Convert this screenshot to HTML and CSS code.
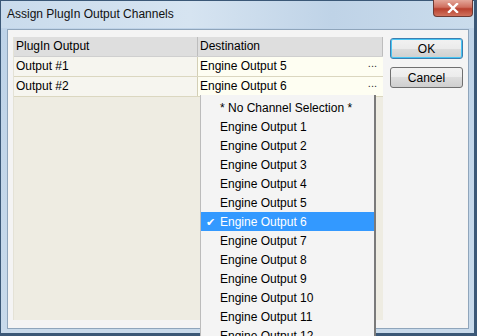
FILE: index.html
```html
<!DOCTYPE html>
<html lang="en">
<head>
    <meta charset="UTF-8">
    <title>Assign PlugIn Output Channels</title>
    <link rel="stylesheet" href="styles.css">
</head>
<body>
    <div class="window">
        <!-- Title bar -->
        <div class="titlebar">
            <span class="title">Assign PlugIn Output Channels</span>
            <div class="close-btn">
                <svg width="14" height="10" viewBox="0 0 14 10">
                    <path d="M3 1 L11 9 M11 1 L3 9" stroke="#fff" stroke-width="2.4" stroke-linecap="square"/>
                </svg>
            </div>
        </div>

        <!-- Client area -->
        <div class="client">
            <div class="grid">
                <div class="grid-row header">
                    <div class="cell col-out">PlugIn Output</div>
                    <div class="cell col-dest">Destination</div>
                </div>
                <div class="grid-row">
                    <div class="cell col-out">Output #1</div>
                    <div class="cell col-dest">Engine Output 5<span class="ellipsis">...</span></div>
                </div>
                <div class="grid-row">
                    <div class="cell col-out">Output #2</div>
                    <div class="cell col-dest">Engine Output 6<span class="ellipsis">...</span></div>
                </div>

                <!-- Open drop-down list -->
                <ul class="dropdown">
                    <li class="none">* No Channel Selection *</li>
                    <li>Engine Output 1</li>
                    <li>Engine Output 2</li>
                    <li>Engine Output 3</li>
                    <li>Engine Output 4</li>
                    <li>Engine Output 5</li>
                    <li class="selected"><span class="check">&#10004;</span>Engine Output 6</li>
                    <li>Engine Output 7</li>
                    <li>Engine Output 8</li>
                    <li>Engine Output 9</li>
                    <li>Engine Output 10</li>
                    <li>Engine Output 11</li>
                    <li>Engine Output 12</li>
                </ul>
            </div>

            <div class="buttons">
                <button class="btn default">OK</button>
                <button class="btn">Cancel</button>
            </div>
        </div>
    </div>
</body>
</html>
```

FILE: styles.css
```css
body {
    margin: 0;
    padding: 0;
    font-family: "Liberation Sans", Arial, sans-serif;
    font-size: 12px;
    color: #000;
    overflow: hidden;
}
.window {
    width: 477px;
    height: 336px;
    box-sizing: border-box;
    border: 1px solid #3b5877;
    border-bottom-width: 3px;
    border-right-width: 3px;
    background: linear-gradient(to bottom, #cbdcec, #bed3e8 30px, #c8daeb);
    display: flex;
    flex-direction: column;
}
.titlebar {
    height: 27px;
    position: relative;
    display: flex;
    align-items: center;
    padding-left: 6px;
    background: linear-gradient(to right, #c9dbec, #d6e4f1 40%, #bfd3e7 70%, #cadcec);
}
.title {
    font-size: 12px;
    color: #111;
    margin-top: -1px;
}
.close-btn {
    position: absolute;
    top: -1px;
    right: 1px;
    width: 40px;
    height: 17px;
    border: 1px solid #6d3a34;
    border-top: none;
    border-radius: 0 0 4px 4px;
    background: linear-gradient(to bottom, #e4a79a, #cf6f5f 45%, #b8402e 55%, #d0725d);
    display: flex;
    align-items: center;
    justify-content: center;
    box-sizing: border-box;
}
.client {
    flex: 1;
    margin: 1px 5px 4px 6px;
    border: 1px solid #8fa5bb;
    background: #f4f4f4;
    display: flex;
    padding: 7px 5px 8px 5px;
    gap: 7px;
}
.grid {
    position: relative;
    width: 369px;
    background: #eeece2;
    border-left: 1px solid #e4e2d6;
}
.grid-row {
    display: flex;
    height: 19px;
    border-bottom: 1px solid #dbd7c0;
}
.grid-row.header {
    height: 19px;
    background: #dedede;
    border-bottom: 1px solid #cfcfcf;
}
.cell {
    line-height: 19px;
    padding-left: 2px;
    white-space: nowrap;
    box-sizing: border-box;
}
.col-out {
    width: 184px;
    border-right: 1px solid #d3cfb6;
    background: #f6f5ef;
}
.col-dest {
    flex: 1;
    position: relative;
    background: #fefef2;
}
.header .col-out,
.header .col-dest {
    background: #dedede;
    border-right-color: #bdbdbd;
}
.header .col-dest {
    border-right: 1px solid #bdbdbd;
}
.ellipsis {
    position: absolute;
    right: 6px;
    top: -3px;
    font-size: 11px;
    color: #333;
}
.dropdown {
    position: absolute;
    left: 186px;
    top: 58px;
    width: 176px;
    height: 241px;
    margin: 0;
    padding: 3px 0 0 0;
    list-style: none;
    background: #f4f4f4;
    border-left: 1px solid #bcbcbc;
    border-right: 2px solid #7a7a7a;
    box-sizing: border-box;
    overflow: hidden;
    z-index: 2;
}
.dropdown li {
    height: 19px;
    line-height: 20px;
    padding-left: 19px;
    position: relative;
    white-space: nowrap;
}
.dropdown li.selected {
    background: #3399ff;
    color: #fff;
}
.check {
    position: absolute;
    left: 5px;
    font-size: 11px;
}
.buttons {
    display: flex;
    flex-direction: column;
    gap: 8px;
    padding-top: 1px;
}
.btn {
    width: 73px;
    height: 21px;
    font-family: "Liberation Sans", Arial, sans-serif;
    font-size: 12px;
    color: #000;
    border: 1px solid #707070;
    border-radius: 3px;
    background: linear-gradient(to bottom, #f2f2f2, #ebebeb 50%, #dddddd 50%, #cfcfcf);
    padding: 0;
}
.btn.default {
    border-color: #3c7fb1;
    box-shadow: inset 0 0 0 1px #48c6f4;
}
```
